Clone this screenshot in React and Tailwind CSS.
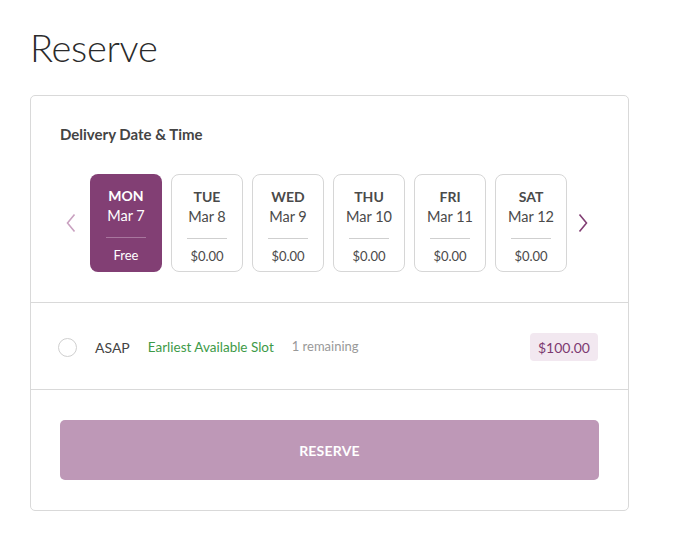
const days = [
  { day: "MON", date: "Mar 7", price: "Free" },
  { day: "TUE", date: "Mar 8", price: "$0.00" },
  { day: "WED", date: "Mar 9", price: "$0.00" },
  { day: "THU", date: "Mar 10", price: "$0.00" },
  { day: "FRI", date: "Mar 11", price: "$0.00" },
  { day: "SAT", date: "Mar 12", price: "$0.00" },
];

function Chevron({ dir, className }) {
  return (
    <svg width="10" height="20" viewBox="0 0 10 20" fill="none" className={className}>
      {dir === "left" ? (
        <path d="M8.5 1.5L1.5 10L8.5 18.5" stroke="currentColor" strokeWidth="1.6" />
      ) : (
        <path d="M1.5 1.5L8.5 10L1.5 18.5" stroke="currentColor" strokeWidth="1.6" />
      )}
    </svg>
  );
}

function DayTile({ item, selected }) {
  return (
    <div
      className={`w-[72px] h-[98px] shrink-0 rounded-[8px] flex flex-col items-center pt-[12px] cursor-pointer ${
        selected ? "bg-[#823f74] text-white" : "bg-white border border-[#d6d6d6] text-[#4a4a4a]"
      }`}
    >
      <div className="text-[14px] font-bold leading-[20px]">{item.day}</div>
      <div className="text-[14.5px] leading-[20px]">{item.date}</div>
      <div className={`w-[40px] h-px mt-[11px] ${selected ? "bg-[#a8769e]" : "bg-[#cfcfcf]"}`} />
      <div className="text-[13px] leading-[20px] mt-[7px]">{item.price}</div>
    </div>
  );
}

export default function App() {
  return (
    <div className="w-[676px] h-[547px] bg-white font-['Lato',sans-serif] pl-[30px] pt-[22px]">
      <h1 className="text-[38px] font-light leading-[50px] text-[#2b2b2b] tracking-[-0.3px]">Reserve</h1>
      <div className="mt-[23px] w-[599px] border border-[#d9d9d9] rounded-[5px]">
        <div className="px-[29px] pt-[29px] pb-[30px] border-b border-[#d9d9d9]">
          <h3 className="text-[15px] font-bold leading-[18px] text-[#444]">Delivery Date &amp; Time</h3>
          <div className="flex items-center mt-[31px]">
            <div className="w-[30px] flex justify-start pl-[6px] text-[#c9a1c0]">
              <Chevron dir="left" />
            </div>
            <div className="flex gap-[9px]">
              {days.map((d, i) => (
                <DayTile key={d.day} item={d} selected={i === 0} />
              ))}
            </div>
            <div className="w-[31px] flex justify-center text-[#823f74]">
              <Chevron dir="right" />
            </div>
          </div>
        </div>
        <div className="h-[87px] px-[27px] pt-[2px] flex items-center border-b border-[#d9d9d9]">
          <div className="w-[19px] h-[19px] rounded-full border border-[#cfcfcf]" />
          <span className="ml-[18px] text-[14px] text-[#444]">ASAP</span>
          <span className="ml-[18px] text-[13.5px] text-[#3d9a47]">Earliest Available Slot</span>
          <span className="ml-[18px] text-[13px] text-[#999]">1 remaining</span>
          <div className="ml-auto mr-[3px] h-[28px] px-[8px] rounded-[4px] bg-[#f2e8f0] text-[#7d3a70] text-[14px] flex items-center">
            $100.00
          </div>
        </div>
        <div className="px-[29px] pt-[30px] pb-[30px]">
          <button className="w-full h-[60px] rounded-[5px] bg-[#be98b7] text-white text-[14px] font-bold tracking-[0.2px]">
            RESERVE
          </button>
        </div>
      </div>
    </div>
  );
}
